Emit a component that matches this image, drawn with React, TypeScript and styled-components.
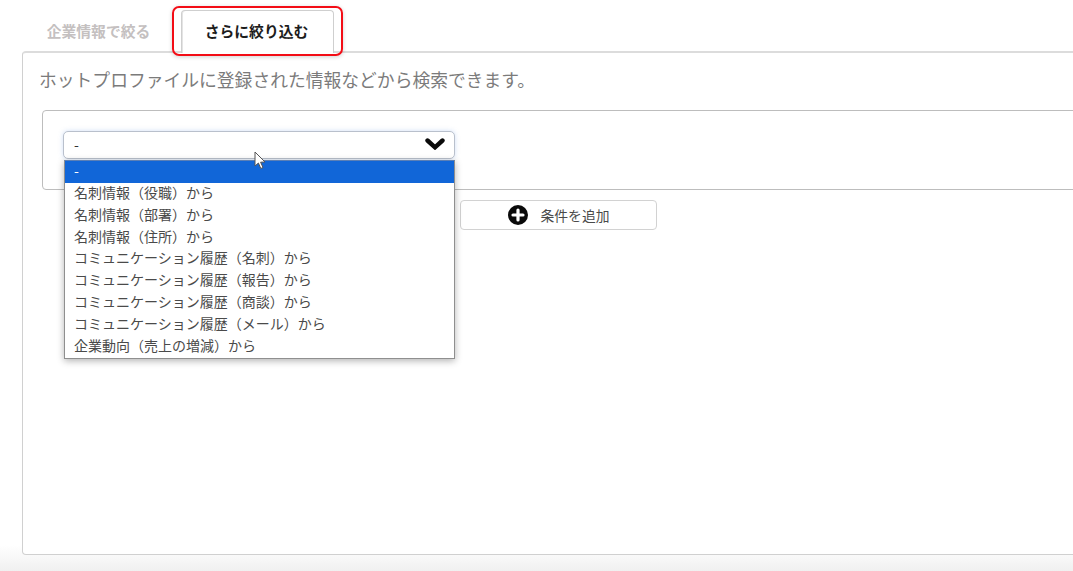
import React from "react";
import styled, { createGlobalStyle } from "styled-components";

const Global = createGlobalStyle`
  html, body { margin: 0; padding: 0; background: #fff; overflow: hidden; }
  body { font-family: "Noto Sans CJK JP", "Liberation Sans", sans-serif; color: #333; }
`;

const Page = styled.div`
  position: relative;
  width: 1073px;
  height: 571px;
  overflow: hidden;
  padding: 10px 0 0 22px;
  box-sizing: border-box;
  background: linear-gradient(to bottom, #fff 0, #fff 545px, #f0f0f0 571px);
`;

const TabBar = styled.div`
  display: flex;
  height: 41px;
  align-items: stretch;
  gap: 6px;
`;

const Tab = styled.div<{ $active?: boolean }>`
  box-sizing: border-box;
  display: flex;
  align-items: center;
  justify-content: center;
  font-size: 14.8px;
  font-weight: 700;
  width: 153px;
  color: ${(p) => (p.$active ? "#1c1c1c" : "#c4c0c0")};
  background: #fff;
  padding-bottom: 1px;
  position: relative;
  z-index: 1;
  ${(p) =>
    p.$active &&
    `
    border: 1px solid #cfcfcf;
    border-bottom: none;
    border-radius: 4px 4px 0 0;
    height: 43px;
    padding: 0 2px 3px 0;
    box-shadow: inset 1px 0 0 #e4e4e4;
  `}
`;

const Highlight = styled.div`
  position: absolute;
  left: 172px;
  top: 6px;
  width: 171px;
  height: 50px;
  box-sizing: border-box;
  border: 2px solid #f30d16;
  border-radius: 7px;
  box-shadow: 0 1px 4px rgba(0, 0, 0, 0.18);
  z-index: 3;
`;

const Panel = styled.section`
  box-sizing: border-box;
  width: 1080px;
  height: 504px;
  background: #fff;
  border: 1px solid #d0d0d0;
  border-top: 2px solid #dcdcdc;
  border-radius: 4px;
  padding: 13px 16px 0 16px;
`;

const Lead = styled.p`
  margin: 0;
  font-size: 17.8px;
  line-height: 26px;
  color: #7b7b7b;
  white-space: nowrap;
`;

const Conditions = styled.div`
  box-sizing: border-box;
  margin: 18px 0 0 3px;
  width: 1040px;
  height: 80px;
  border: 1px solid #bdbdbd;
  border-radius: 4px;
  padding: 20px 0 0 20px;
`;

const SelectWrap = styled.div`
  position: relative;
  width: 392px;
`;

const SelectBox = styled.div`
  box-sizing: border-box;
  height: 28px;
  display: flex;
  align-items: center;
  justify-content: space-between;
  padding: 0 9px 2px 10px;
  border: 1px solid #b9c0cc;
  border-radius: 5px;
  background: #fff;
  box-shadow: 0 0 5px rgba(120, 160, 225, 0.35);
  font-size: 14px;
  color: #333;
`;

const Dropdown = styled.ul`
  position: absolute;
  left: 1px;
  top: 29px;
  width: 391px;
  margin: 0;
  padding: 0;
  list-style: none;
  box-sizing: border-box;
  background: #fff;
  border: 1px solid #8f8f8f;
  border-top: 1px solid #5b7fb5;
  box-shadow: 0 2px 7px rgba(0, 0, 0, 0.3);
  z-index: 2;
`;

const Option = styled.li<{ $selected?: boolean }>`
  height: 21.85px;
  line-height: 18px;
  padding-left: 9px;
  font-size: 14px;
  white-space: nowrap;
  color: ${(p) => (p.$selected ? "#fff" : "#4a4a4a")};
  background: ${(p) => (p.$selected ? "#1166d8" : "#fff")};
`;

const ActionRow = styled.div`
  padding: 10px 0 0 421px;
`;

const AddButton = styled.button`
  box-sizing: border-box;
  width: 197px;
  height: 30px;
  display: flex;
  align-items: center;
  justify-content: center;
  gap: 13px;
  padding: 0;
  background: #fff;
  border: 1px solid #d2d2d2;
  border-radius: 4px;
  font: inherit;
  font-size: 13.8px;
  color: #4a4a4a;
`;

const Cursor = styled.svg`
  position: absolute;
  left: 254px;
  top: 151px;
  z-index: 4;
`;

const options = [
  "名刺情報（役職）から",
  "名刺情報（部署）から",
  "名刺情報（住所）から",
  "コミュニケーション履歴（名刺）から",
  "コミュニケーション履歴（報告）から",
  "コミュニケーション履歴（商談）から",
  "コミュニケーション履歴（メール）から",
  "企業動向（売上の増減）から",
];

export default function App() {
  return (
    <Page>
      <Global />
      <TabBar>
        <Tab>企業情報で絞る</Tab>
        <Tab $active>さらに絞り込む</Tab>
      </TabBar>
      <Highlight />
      <Panel>
        <Lead>ホットプロファイルに登録された情報などから検索できます。</Lead>
        <Conditions>
          <SelectWrap>
            <SelectBox>
              <span>-</span>
              <svg width="20" height="12" viewBox="0 0 20 12" aria-hidden="true">
                <path d="M2.5 2.5 L10 9.3 L17.5 2.5" fill="none" stroke="#0a0a0a" strokeWidth="4.4" strokeLinecap="round" strokeLinejoin="miter" />
              </svg>
            </SelectBox>
            <Dropdown>
              <Option $selected>-</Option>
              {options.map((o) => (
                <Option key={o}>{o}</Option>
              ))}
            </Dropdown>
          </SelectWrap>
        </Conditions>
        <ActionRow>
          <AddButton>
            <svg width="20" height="20" viewBox="0 0 20 20" aria-hidden="true">
              <circle cx="10" cy="10" r="10" fill="#0a0a0a" />
              <path d="M10 5 V15 M5 10 H15" stroke="#fff" strokeWidth="3.2" strokeLinecap="round" />
            </svg>
            <span>条件を追加</span>
          </AddButton>
        </ActionRow>
      </Panel>
      <Cursor width="13" height="19" viewBox="0 0 13 19" aria-hidden="true">
        <path d="M1 1 V15 L4.4 12 L6.8 17.5 L9 16.5 L6.6 11.2 L11 11 Z" fill="#fff" stroke="#555" strokeWidth="1" strokeLinejoin="round" />
      </Cursor>
    </Page>
  );
}
